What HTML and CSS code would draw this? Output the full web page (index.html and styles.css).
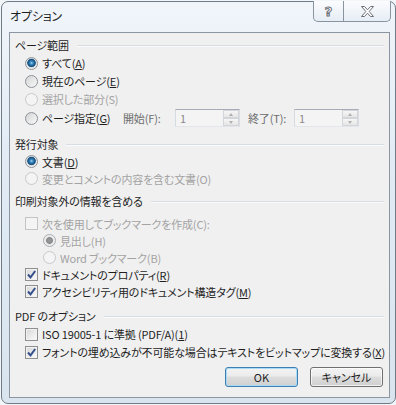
FILE: index.html
```html
<!DOCTYPE html>
<html lang="ja">
<head>
    <meta charset="UTF-8">
    <title>オプション</title>
    <link rel="stylesheet" href="styles.css">
</head>
<body>
    <div class="window">
        <div class="titlebar">
            <span class="title">オプション</span>
            <div class="caption-btns">
                <span class="cap-btn help">?</span>
                <span class="cap-btn close">
                    <svg width="13" height="11" viewBox="0 0 13 11">
                        <polygon points="0.5,0.5 3.5,0.5 6.5,3.8 9.5,0.5 12.5,0.5 8.2,5.5 12.5,10.5 9.5,10.5 6.5,7.2 3.5,10.5 0.5,10.5 4.8,5.5" fill="#fff" stroke="#6a6f75" stroke-width="1"/>
                    </svg>
                </span>
            </div>
        </div>

        <div class="client">
            <!-- ページ範囲 -->
            <section class="group range">
                <div class="group-head"><span>ページ範囲</span><i class="rule"></i></div>
                <div class="row"><span class="radio checked"></span><span>すべて(<u>A</u>)</span></div>
                <div class="row"><span class="radio"></span><span>現在のページ(<u>E</u>)</span></div>
                <div class="row disabled"><span class="radio"></span><span>選択した部分(S)</span></div>
                <div class="row spin-row">
                    <span class="radio"></span><span class="spin-label">ページ指定(<u>G</u>)</span>
                    <span class="field-label">開始(F):</span>
                    <span class="spin"><span class="spin-value">1</span><span class="spin-btns"><i class="up"></i><i class="down"></i></span></span>
                    <span class="field-label end">終了(T):</span>
                    <span class="spin"><span class="spin-value">1</span><span class="spin-btns"><i class="up"></i><i class="down"></i></span></span>
                </div>
            </section>

            <!-- 発行対象 -->
            <section class="group target">
                <div class="group-head"><span>発行対象</span><i class="rule"></i></div>
                <div class="row"><span class="radio checked"></span><span>文書(<u>D</u>)</span></div>
                <div class="row disabled"><span class="radio"></span><span>変更とコメントの内容を含む文書(O)</span></div>
            </section>

            <!-- 印刷対象外の情報 -->
            <section class="group extra">
                <div class="group-head"><span>印刷対象外の情報を含める</span><i class="rule"></i></div>
                <div class="row disabled"><span class="check"></span><span>次を使用してブックマークを作成(C):</span></div>
                <div class="row sub disabled"><span class="radio checked"></span><span>見出し(H)</span></div>
                <div class="row sub disabled"><span class="radio"></span><span>Word ブックマーク(B)</span></div>
                <div class="row"><span class="check checked"></span><span>ドキュメントのプロパティ(<u>R</u>)</span></div>
                <div class="row"><span class="check checked"></span><span>アクセシビリティ用のドキュメント構造タグ(<u>M</u>)</span></div>
            </section>

            <!-- PDF のオプション -->
            <section class="group pdf">
                <div class="group-head"><span>PDF のオプション</span><i class="rule"></i></div>
                <div class="row"><span class="check"></span><span>ISO 19005-1 に準拠 (PDF/A)(<u>1</u>)</span></div>
                <div class="row"><span class="check checked"></span><span>フォントの埋め込みが不可能な場合はテキストをビットマップに変換する(<u>X</u>)</span></div>
            </section>

            <div class="actions">
                <button class="btn default">OK</button>
                <button class="btn">キャンセル</button>
            </div>
        </div>
    </div>
</body>
</html>
```

FILE: styles.css
```css
body {
    margin: 0;
    background: #f3f6f9;
    font-family: "Noto Sans CJK JP", sans-serif;
    font-size: 11px;
    letter-spacing: -0.15px;
    font-feature-settings: "palt";
    color: #1e1e1e;
}

.window {
    box-sizing: border-box;
    width: 395px;
    height: 403px;
    margin: 1px 0 0 1px;
    padding: 0 5px 0 7px;
    border: 1px solid #6f7b87;
    border-radius: 7px;
    background: linear-gradient(to bottom, #f0f5fa 0%, #e2ebf4 40%, #d9e4ef 100%);
}

.titlebar {
    height: 30px;
    display: flex;
    justify-content: space-between;
    align-items: flex-start;
}

.title {
    padding: 6px 0 0 1px;
    font-size: 12px;
    line-height: 16px;
}

.caption-btns {
    display: flex;
    margin-top: -1px;
    margin-right: -1px;
    height: 20px;
    border: 1px solid #8994a0;
    border-top: none;
    border-radius: 0 0 5px 5px;
    background: linear-gradient(to bottom, #fbfcfe, #e6edf4);
    overflow: hidden;
}

.cap-btn {
    display: flex;
    align-items: center;
    justify-content: center;
}

.help {
    width: 29px;
    border-right: 1px solid #8994a0;
    font-family: "DejaVu Sans", sans-serif;
    font-weight: bold;
    font-size: 13px;
    color: #fff;
    -webkit-text-stroke: 1px #6a6f75;
}

.close {
    width: 46px;
}

.client {
    box-sizing: border-box;
    width: 381px;
    height: 366px;
    padding: 3px 0 0 5px;
    border: 1px solid #8a96a2;
    background: #f0f0f0;
}

/* グループ見出し */
.group-head {
    height: 18px;
    display: flex;
    align-items: center;
    padding-right: 5px;
}

.rule {
    flex: 1;
    height: 1px;
    margin-left: 8px;
    background: #d7dde3;
    box-shadow: 0 1px 0 #fbfbfb;
}

.row {
    height: 18px;
    display: flex;
    align-items: center;
    padding-left: 10px;
    white-space: nowrap;
}

.row.sub {
    padding-left: 28px;
}

.row.disabled {
    color: #a3a3a3;
}

.target {
    margin-top: 7px;
}

.target .row,
.extra .row {
    height: 17px;
}

.extra {
    margin-top: 5px;
}

.extra .group-head {
    margin-bottom: 5px;
}

.pdf {
    margin-top: 7px;
}

u {
    text-underline-offset: 1px;
}

/* ラジオボタン */
.radio {
    box-sizing: border-box;
    width: 13px;
    height: 13px;
    margin-right: 4px;
    border-radius: 50%;
    border: 1px solid #8e9398;
    background: linear-gradient(135deg, #d4d4d4, #f9f9f9);
    flex: none;
}

.radio.checked {
    background: radial-gradient(circle at 50% 45%, #9fd6f4 0, #3a8cc4 1.5px, #1b4f7c 3.5px, #2c6b9c 4px, #dcdcdc 4.6px, #f7f7f7 6px);
}

.disabled .radio {
    border-color: #c6c9cc;
    background: #f4f4f4;
}

.disabled .radio.checked {
    border-color: #a9adb1;
    background: radial-gradient(circle, #9a9a9a 0, #8a8a8a 3px, #e6e6e6 3.8px, #f4f4f4 6px);
}

/* チェックボックス */
.check {
    box-sizing: border-box;
    width: 13px;
    height: 13px;
    margin-right: 4px;
    border: 1px solid #8e8f8f;
    background: linear-gradient(135deg, #d6d6d6, #fbfbfb);
    box-shadow: inset 0 0 0 1px #f2f2f2;
    flex: none;
}

.check.checked {
    background:
        url("data:image/svg+xml,%3Csvg xmlns='http://www.w3.org/2000/svg' width='11' height='11'%3E%3Cpath d='M2 5.5 L4.5 8.3 L9.2 2' fill='none' stroke='%2334508a' stroke-width='2'/%3E%3C/svg%3E") center/11px 11px no-repeat,
        linear-gradient(135deg, #d6d6d6, #fbfbfb);
}

.disabled .check {
    border-color: #c4c4c4;
    background: #f4f4f4;
    box-shadow: none;
}

/* ページ指定 */
.range .spin-row {
    height: 20px;
}

.spin-label {
    width: 81px;
}

.field-label {
    width: 52px;
    color: #6d6d6d;
}

.field-label.end {
    width: 46px;
    margin-left: 8px;
}

.spin {
    box-sizing: border-box;
    width: 65px;
    height: 18px;
    display: flex;
    border: 1px solid;
    border-color: #a5acb5 #d9dde3 #e3e7ec #d6dbe1;
    background: #f4f4f4;
}

.spin-value {
    flex: 1;
    padding-left: 4px;
    line-height: 16px;
    color: #8a8a8a;
}

.spin-btns {
    width: 16px;
    display: flex;
    flex-direction: column;
}

.spin-btns i {
    flex: 1;
    border: 1px solid #d2d6da;
    background: linear-gradient(to bottom, #f6f6f6, #e6e6e6);
    position: relative;
}

.spin-btns i::after {
    content: "";
    position: absolute;
    left: 5px;
    top: 2px;
    border-left: 2.5px solid transparent;
    border-right: 2.5px solid transparent;
}

.spin-btns .up::after {
    border-bottom: 3px solid #b0b0b0;
}

.spin-btns .down::after {
    border-top: 3px solid #b0b0b0;
}

/* ボタン */
.actions {
    margin-top: 6px;
    display: flex;
    justify-content: flex-end;
    gap: 12px;
    padding-right: 6px;
}

.btn {
    width: 73px;
    height: 20px;
    padding: 0;
    font-family: inherit;
    font-size: 11px;
    font-feature-settings: "palt";
    color: #1e1e1e;
    border: 1px solid #707070;
    border-radius: 3px;
    background: linear-gradient(to bottom, #f3f3f3 0%, #ebebeb 45%, #dddddd 50%, #cfcfcf 100%);
    box-shadow: inset 0 0 0 1px rgba(255, 255, 255, 0.7);
}

.btn.default {
    border-color: #3c7fb1;
    box-shadow: inset 0 0 0 1px #a9dbf6;
}
```
